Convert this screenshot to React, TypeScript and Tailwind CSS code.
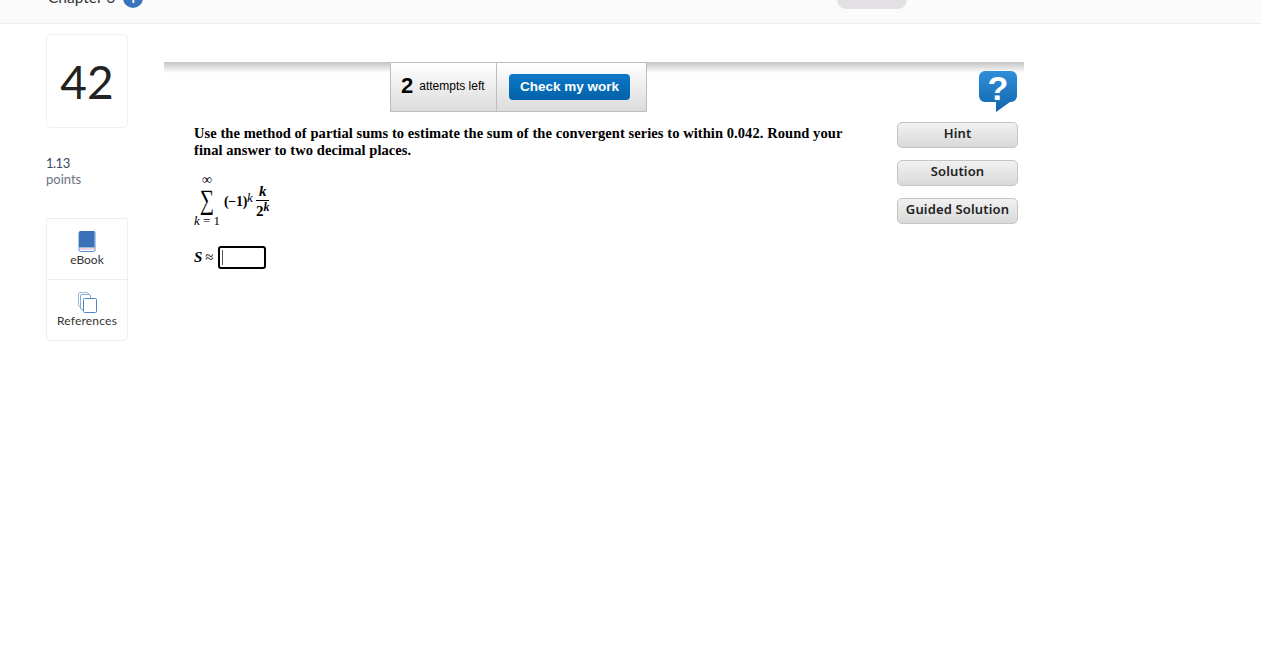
export default function App() {
  const side = "font-['Lato',sans-serif]";
  const btn =
    "w-[121px] h-[26px] pb-[3px] rounded-[5px] border border-[#c4c4c4] bg-gradient-to-b from-[#f1f1f1] to-[#d9d9d9] text-[13px] font-semibold text-[#222] tracking-[0.15px] font-['Noto_Sans',sans-serif] flex items-center justify-center leading-none";
  return (
    <div className="w-[1261px] h-[649px] bg-white overflow-hidden relative">
      <div className={`h-[24px] bg-[#fbfbfb] border-b border-[#eeeeee] overflow-hidden pl-[48px] flex items-start ${side}`}>
        <div className="w-[97px] flex items-start gap-[8px] -mt-[13px]">
          <span className="text-[15.5px] leading-[20px] text-[#333] whitespace-nowrap">Chapter 6</span>
          <span className="w-[20px] h-[20px] shrink-0 mt-[1px] rounded-full bg-[#3b73bd] text-white text-[14px] font-bold leading-[20px] text-center">i</span>
        </div>
        <div className="w-[70px] h-[9px] ml-[692px] bg-[#e3e1e3] rounded-b-[11px]" />
      </div>
      <div className="flex pl-[46px] pt-[10px]">
        <div className={`w-[82px] shrink-0 flex flex-col ${side}`}>
          <div className="h-[94px] pt-[2px] rounded-[5px] border border-[#f0f0f0] flex items-center justify-center text-[46px] text-[#222] leading-none">42</div>
          <div className="mt-[27px] text-[13px] leading-[16px] text-[#3b4a63] tracking-[-0.5px]">1.13</div>
          <div className="text-[13px] leading-[17px] text-[#6b7280]">points</div>
          <div className="mt-[30px] border border-[#eeeeee] rounded-b-[5px] flex flex-col">
            <div className="h-[61px] border-b border-[#eeeeee] flex flex-col items-center pt-[12px]">
              <svg width="18" height="21" viewBox="0 0 18 21">
                <rect x="1" y="0.5" width="16" height="20" rx="1.5" fill="#fff" stroke="#5b8fd0" />
                <path d="M1 16.5V2a2 2 0 0 1 2-2h13.5v16.5H3a2 2 0 0 0-2 0Z" fill="#3a72b9" />
                <path d="M2 18h15" stroke="#e0a9b8" strokeWidth="1" />
              </svg>
              <span className="text-[12px] leading-[14px] mt-[1px] text-[#333]">eBook</span>
            </div>
            <div className="h-[60px] flex flex-col items-center pt-[12px]">
              <svg width="19" height="21" viewBox="0 0 19 21" fill="#fff">
                <rect x="0.5" y="0.5" width="10" height="14" rx="1.5" stroke="#9db9dc" />
                <rect x="2.5" y="2.5" width="10" height="15" rx="1.5" stroke="#8aa9d2" />
                <rect x="5.5" y="6.5" width="13" height="14" rx="1" stroke="#4f86c6" />
              </svg>
              <span className="text-[12px] leading-[14px] tracking-[0.2px] mt-[1px] text-[#333]">References</span>
            </div>
          </div>
        </div>
        <div className="w-[860px] ml-[36px] mt-[28px] flex flex-col">
          <div className="h-[50px] relative flex pl-[226px]">
            <div className="absolute left-0 right-0 top-0 h-[11px] bg-gradient-to-b from-[#c4c4c4] to-white" />
            <div className="relative w-[107px] h-[50px] pl-[10px] pb-[2px] border border-[#bdbdbd] bg-gradient-to-b from-white to-[#dcdcdc] flex items-center gap-[6px] font-['Liberation_Sans',sans-serif] text-black">
              <span className="text-[22px] font-bold leading-none">2</span>
              <span className="text-[12px] leading-none -mt-[1px]">attempts left</span>
            </div>
            <div className="relative w-[151px] h-[50px] -ml-px pl-[12px] border border-[#bdbdbd] bg-gradient-to-b from-white to-[#dcdcdc] flex items-center">
              <div className="w-[121px] h-[26px] rounded-[4px] bg-gradient-to-b from-[#0a78c8] to-[#0462a8] text-white text-[13.5px] font-bold font-['Liberation_Sans',sans-serif] flex items-center justify-center">
                Check my work
              </div>
            </div>
            <svg className="absolute left-[815px] top-[9px]" width="39" height="41" viewBox="0 0 39 41">
              <defs>
                <linearGradient id="q" x1="0" y1="0" x2="0" y2="1">
                  <stop offset="0" stopColor="#2f8fd8" />
                  <stop offset="1" stopColor="#0f65ad" />
                </linearGradient>
              </defs>
              <path d="M6 0h26a6 6 0 0 1 6 6v19a6 6 0 0 1-6 6H31L17 41V31H6a6 6 0 0 1-6-6V6a6 6 0 0 1 6-6Z" fill="url(#q)" />
              <text x="19" y="29" textAnchor="middle" fill="#fff" fontSize="34" fontWeight="700" fontFamily="Liberation Sans">?</text>
            </svg>
          </div>
          <div className="flex mt-[10px] pl-[30px]">
            <div className="w-[703px] pt-[3px] font-['Liberation_Serif',serif] text-black">
              <p className="w-[660px] text-[14.5px] leading-[17px] font-bold tracking-[0.07px]">
                Use the method of partial sums to estimate the sum of the convergent series to within 0.042. Round your final answer to two decimal places.
              </p>
              <div className="mt-[15px] flex items-center h-[56px]">
                <div className="w-[26px] flex flex-col items-center">
                  <span className="text-[14px] leading-[10px]">∞</span>
                  <span className="text-[20px] leading-[28px] scale-y-[1.4]">∑</span>
                  <span className="text-[13px] leading-[16px] whitespace-nowrap"><i>k</i> = 1</span>
                </div>
                <span className="ml-[4px] text-[14px] font-bold leading-none tracking-[-0.3px]">(−1)</span>
                <i className="text-[13px] leading-none -mt-[9px]">k</i>
                <div className="flex flex-col items-center ml-[3px] font-bold">
                  <i className="text-[15px] leading-[17px]">k</i>
                  <span className="w-[13px] h-px bg-black" />
                  <span className="text-[15px] leading-[20px] whitespace-nowrap">2<i className="text-[12px] align-[5px] leading-none">k</i></span>
                </div>
              </div>
              <div className="mt-[16px] flex items-center h-[23px]">
                <i className="text-[15px] font-bold">S</i>
                <span className="text-[15px] ml-[3px]">≈</span>
                <div className="ml-[4px] w-[48px] h-[23px] border-2 border-black rounded-[3px] flex items-center pl-[2px]">
                  <span className="w-px h-[15px] bg-[#555]" />
                </div>
              </div>
            </div>
            <div className="flex flex-col gap-[12px]">
              <div className={btn}>Hint</div>
              <div className={btn}>Solution</div>
              <div className={btn}>Guided Solution</div>
            </div>
          </div>
        </div>
      </div>
    </div>
  );
}
